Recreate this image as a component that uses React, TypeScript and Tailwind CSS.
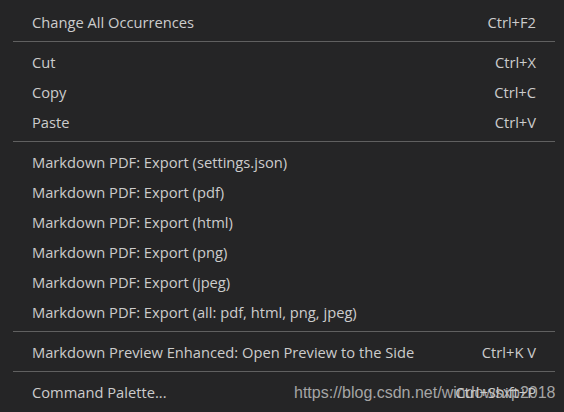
import React from "react";

type Item = { label: string; shortcut?: string } | "sep";

const items: Item[] = [
  { label: "Change All Occurrences", shortcut: "Ctrl+F2" },
  "sep",
  { label: "Cut", shortcut: "Ctrl+X" },
  { label: "Copy", shortcut: "Ctrl+C" },
  { label: "Paste", shortcut: "Ctrl+V" },
  "sep",
  { label: "Markdown PDF: Export (settings.json)" },
  { label: "Markdown PDF: Export (pdf)" },
  { label: "Markdown PDF: Export (html)" },
  { label: "Markdown PDF: Export (png)" },
  { label: "Markdown PDF: Export (jpeg)" },
  { label: "Markdown PDF: Export (all: pdf, html, png, jpeg)" },
  "sep",
  { label: "Markdown Preview Enhanced: Open Preview to the Side", shortcut: "Ctrl+K V" },
  "sep",
  { label: "Command Palette...", shortcut: "Ctrl+Shift+P" },
];

export default function App() {
  return (
    <div className="w-[564px] h-[412px] bg-[#252526] overflow-hidden pt-[7px] relative" style={{ fontFamily: '"Open Sans", "Noto Sans", sans-serif' }}>
      {items.map((it, i) =>
        it === "sep" ? (
          <div key={i} className="pt-[4px] pb-[5px] pl-[13px] pr-[9px]">
            <div className="h-px bg-[#606060]" />
          </div>
        ) : (
          <div key={i} className="h-[30px] flex items-center justify-between pl-[32px] pr-[28px] text-[14.7px] text-[#cccccc]">
            <span>{it.label}</span>
            {it.shortcut && <span>{it.shortcut}</span>}
          </div>
        )
      )}
      <div
        className="absolute left-[294px] top-[381px] text-[16px] text-[#c8c8c8]/80 leading-[24px]"
        style={{ fontFamily: '"Liberation Sans", Arial, sans-serif' }}
      >
        https://blog.csdn.net/windowsxp2018
      </div>
    </div>
  );
}
